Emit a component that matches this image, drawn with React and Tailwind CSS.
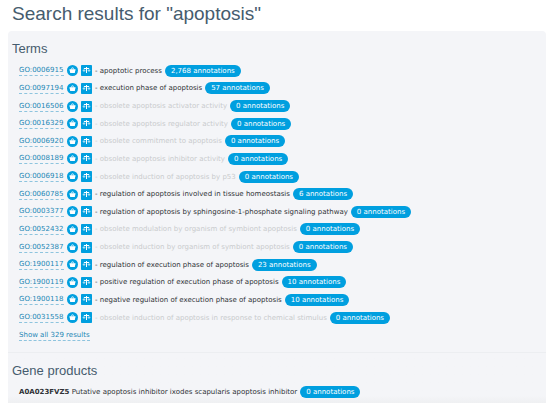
const terms = [
  { id: "GO:0006915", name: "apoptotic process", count: "2,768" },
  { id: "GO:0097194", name: "execution phase of apoptosis", count: "57" },
  { id: "GO:0016506", name: "obsolete apoptosis activator activity", count: "0", obsolete: true },
  { id: "GO:0016329", name: "obsolete apoptosis regulator activity", count: "0", obsolete: true },
  { id: "GO:0006920", name: "obsolete commitment to apoptosis", count: "0", obsolete: true },
  { id: "GO:0008189", name: "obsolete apoptosis inhibitor activity", count: "0", obsolete: true },
  { id: "GO:0006918", name: "obsolete induction of apoptosis by p53", count: "0", obsolete: true },
  { id: "GO:0060785", name: "regulation of apoptosis involved in tissue homeostasis", count: "6" },
  { id: "GO:0003377", name: "regulation of apoptosis by sphingosine-1-phosphate signaling pathway", count: "0" },
  { id: "GO:0052432", name: "obsolete modulation by organism of symbiont apoptosis", count: "0", obsolete: true },
  { id: "GO:0052387", name: "obsolete induction by organism of symbiont apoptosis", count: "0", obsolete: true },
  { id: "GO:1900117", name: "regulation of execution phase of apoptosis", count: "23" },
  { id: "GO:1900119", name: "positive regulation of execution phase of apoptosis", count: "10" },
  { id: "GO:1900118", name: "negative regulation of execution phase of apoptosis", count: "10" },
  { id: "GO:0031558", name: "obsolete induction of apoptosis in response to chemical stimulus", count: "0", obsolete: true },
];

function TermLink({ children }) {
  return (
    <a href="#" className="min-w-[45px] border-b border-dashed border-[#8ec4de] pt-px leading-[9px] text-[#1c87b5]">
      {children}
    </a>
  );
}

function Annotations({ count }) {
  return (
    <a href="#" className="flex h-3 items-center rounded-full bg-[#009fdf] px-[6px] text-white">
      {count} annotations
    </a>
  );
}

function BasketButton({ id }) {
  return (
    <button type="button" aria-label={`Add ${id} to basket`} className="size-[11px]">
      <svg viewBox="0 0 22 22" className="block size-full">
        <circle cx="11" cy="11" r="11" fill="#009fdf" />
        <path d="M8.5 9 L10.5 5 M13.5 9 L11.5 5" stroke="#fff" strokeWidth="1.6" fill="none" />
        <path d="M5 8.5 H17 V11 H16.5 L15.6 16 H6.4 L5.5 11 H5 Z" fill="#fff" />
      </svg>
    </button>
  );
}

function CompareButton({ id }) {
  return (
    <button type="button" aria-label={`Compare ${id}`} className="size-[11px]">
      <svg viewBox="0 0 22 22" className="block size-full">
        <rect width="22" height="22" rx="1.5" fill="#009fdf" />
        <path d="M11 4 V16 M6 7 H16" stroke="#fff" strokeWidth="2" fill="none" />
        <path d="M6 7 L3.5 11.5 H8.5 Z M16 7 L13.5 11.5 H18.5 Z" stroke="#fff" strokeWidth="0.6" fill="none" />
        <path d="M3.5 11 H8.5 Q6 14.5 3.5 11 Z M13.5 11 H18.5 Q16 14.5 13.5 11 Z" fill="#fff" />
      </svg>
    </button>
  );
}

export default function App() {
  return (
    <main className="bg-white pr-[7px] pb-[5px] pl-2 font-['Verdana','DejaVu_Sans',sans-serif] text-[7px] leading-[12px] text-[#2f3236]">
      <h1 className="px-1 pt-[3px] pb-[6px] font-['Liberation_Sans',sans-serif] text-[19px] leading-[22px] text-[#465c6e]">
        Search results for "apoptosis"
      </h1>
      <div className="rounded-t-sm bg-[#f4f5f8]">
        <section className="border-b border-[#eceef1] px-1 pt-[10px] pb-2">
          <h2 className="font-['Liberation_Sans',sans-serif] text-[13px] leading-[16px] text-[#465c6e]">Terms</h2>
          <ul className="grid h-[287px] auto-rows-fr items-center px-[7px] pt-[5px]">
            {terms.map((term) => (
              <li key={term.id} className="flex items-center gap-[3px] whitespace-nowrap">
                <TermLink>{term.id}</TermLink>
                <BasketButton id={term.id} />
                <CompareButton id={term.id} />
                <span className={term.obsolete ? "text-[#c9cbcd]" : "text-[#2f3236]"}>- {term.name}</span>
                <Annotations count={term.count} />
              </li>
            ))}
            <li className="flex">
              <TermLink>Show all 329 results</TermLink>
            </li>
          </ul>
        </section>
        <section className="bg-linear-to-b from-[#f4f5f8] from-85% to-[#eff0f2] px-1 pt-[10px] pb-[5px]">
          <h2 className="font-['Liberation_Sans',sans-serif] text-[13px] leading-[16px] text-[#465c6e]">Gene products</h2>
          <p className="flex items-center gap-[3px] px-[7px] pt-[7px] whitespace-nowrap">
            <span>
              <strong>A0A023FVZ5</strong> Putative apoptosis inhibitor ixodes scapularis apoptosis inhibitor
            </span>
            <Annotations count="0" />
          </p>
        </section>
      </div>
    </main>
  );
}
